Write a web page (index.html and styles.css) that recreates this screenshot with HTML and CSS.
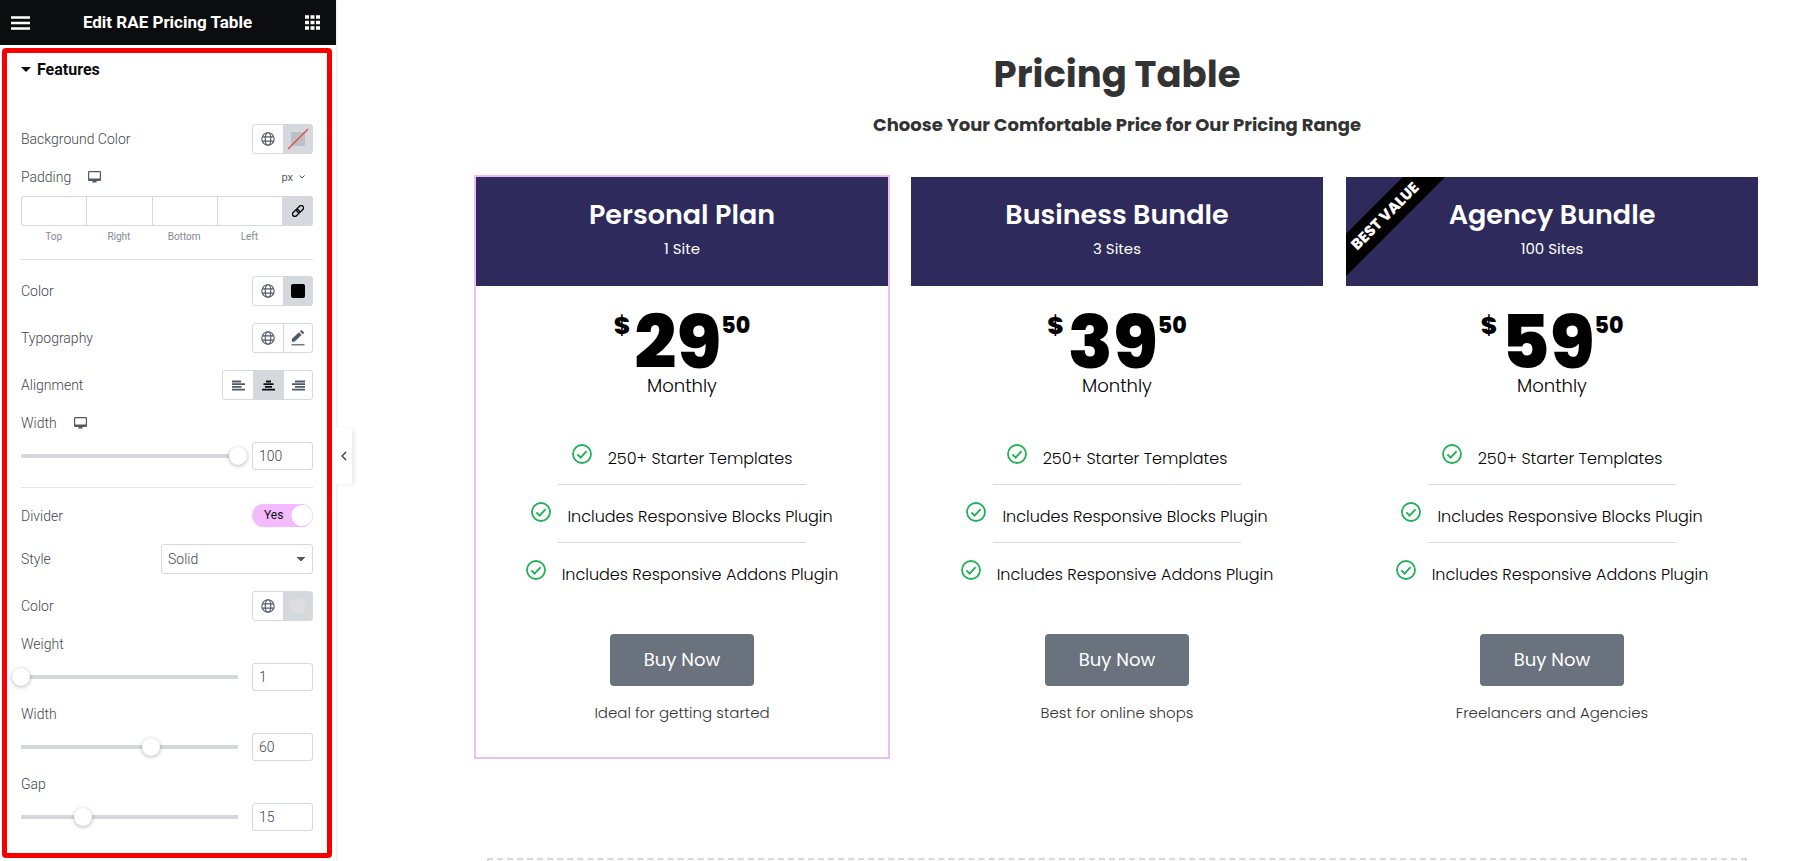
FILE: index.html
```html
<!DOCTYPE html>
<html lang="en">
<head>
    <meta charset="UTF-8">
    <meta name="viewport" content="width=device-width, initial-scale=1.0">
    <title>Edit RAE Pricing Table</title>
    <link rel="stylesheet" href="styles.css">
</head>
<body>
    <!-- shared icons -->
    <svg class="sprite" aria-hidden="true">
        <symbol id="icon-globe" viewBox="0 0 14 14">
            <g fill="none" stroke="currentColor" stroke-width="1.1">
                <circle cx="7" cy="7" r="6.2"/>
                <ellipse cx="7" cy="7" rx="2.8" ry="6.2"/>
                <path d="M1.2 4.9h11.6M1.2 9.1h11.6"/>
            </g>
        </symbol>
        <symbol id="icon-desktop" viewBox="0 0 13 12">
            <path d="M1.2 0h10.6Q13 0 13 1.2v7.6Q13 10 11.8 10H8.4v.6L9 11.4H4l.6-.8V10H1.2Q0 10 0 8.800V1.200Q0 0 1.200 0zM1.200 1.200v6.300h10.600V1.200z" fill="currentColor" fill-rule="evenodd"/>
        </symbol>
        <symbol id="icon-check" viewBox="0 0 20 20">
            <circle cx="10" cy="10" r="9" fill="none" stroke="currentColor" stroke-width="1.8"/>
            <path d="M5.400 10.400l3.200 3.200 6-6.400" fill="none" stroke="currentColor" stroke-width="1.900"/>
        </symbol>
    </svg>

    <div class="editor">
        <aside class="sidebar">
            <header class="sidebar-header">
                <button class="header-btn" aria-label="Menu">
                    <svg width="19" height="14" viewBox="0 0 19 14"><path d="M0 1.500h19M0 7h19M0 12.500h19" stroke="#fff" stroke-width="2.600"/></svg>
                </button>
                <h2 class="sidebar-title">Edit RAE Pricing Table</h2>
                <button class="header-btn" aria-label="Widgets">
                    <svg width="15" height="15" viewBox="0 0 15 15"><path d="M0 2h4m1.500 0h4M11 2h4M0 7.500h4m1.500 0h4m1.500 0h4M0 13h4m1.500 0h4m1.500 0h4" stroke="#fff" stroke-width="3.600"/></svg>
                </button>
            </header>

            <div class="panel">
                <button class="section-toggle" aria-expanded="true">Features</button>

                <div class="group">
                    <div class="row">
                        <span class="label">Background Color</span>
                        <div class="btn-group">
                            <button class="btn" aria-label="Global background color"><svg class="icon"><use href="#icon-globe"/></svg></button>
                            <button class="btn active" aria-label="Pick background color">
                                <svg width="22" height="22" viewBox="0 0 22 22"><rect x="4" y="4" width="14" height="14" rx="1" fill="#bcbfc3"/><path d="M1 21L21 1" stroke="#e2474b" stroke-width="1.300"/></svg>
                            </button>
                        </div>
                    </div>
                    <div class="block">
                        <div class="block-head">
                            <span class="label">Padding</span>
                            <svg class="device"><use href="#icon-desktop"/></svg>
                            <button class="unit">px
                                <svg width="6" height="4" viewBox="0 0 6 4"><path d="M.5.5L3 3 5.500.5" fill="none" stroke="currentColor"/></svg>
                            </button>
                        </div>
                        <div class="dimensions">
                            <div class="dimension">
                                <input id="padTop" type="text">
                                <label for="padTop">Top</label>
                            </div>
                            <div class="dimension">
                                <input id="padRight" type="text">
                                <label for="padRight">Right</label>
                            </div>
                            <div class="dimension">
                                <input id="padBottom" type="text">
                                <label for="padBottom">Bottom</label>
                            </div>
                            <div class="dimension">
                                <input id="padLeft" type="text">
                                <label for="padLeft">Left</label>
                            </div>
                            <button class="link-btn" aria-label="Link values">
                                <svg width="12" height="12" viewBox="0 0 12 12"><g transform="rotate(-45 6 6)" fill="none" stroke="currentColor" stroke-width="1.400"><rect x="-.8" y="3.700" width="7.800" height="4.600" rx="2.300"/><rect x="5" y="3.700" width="7.800" height="4.600" rx="2.300"/></g></svg>
                            </button>
                        </div>
                    </div>
                </div>

                <div class="group">
                    <div class="row">
                        <span class="label">Color</span>
                        <div class="btn-group">
                            <button class="btn" aria-label="Global color"><svg class="icon"><use href="#icon-globe"/></svg></button>
                            <button class="btn active" aria-label="Pick color"><span class="swatch black"></span></button>
                        </div>
                    </div>
                    <div class="row">
                        <span class="label">Typography</span>
                        <div class="btn-group">
                            <button class="btn" aria-label="Global typography"><svg class="icon"><use href="#icon-globe"/></svg></button>
                            <button class="btn" aria-label="Edit typography">
                                <svg width="14" height="16" viewBox="0 0 14 16"><path d="M.8 11.800V9L8 2.300l2.600 2.600-7.200 6.900zM9 1.400L10.400 0l3 2.800-1.700 1.500z" fill="currentColor"/><path d="M.5 14.800h13" stroke="currentColor" stroke-width="1.200"/></svg>
                            </button>
                        </div>
                    </div>
                    <div class="row">
                        <span class="label">Alignment</span>
                        <div class="btn-group">
                            <button class="btn" aria-label="Left"><svg class="align" viewBox="0 0 13 11"><path d="M0 1.500h9M0 4.200h13M0 6.900h9.500M0 9.600h13"/></svg></button>
                            <button class="btn active" aria-label="Center"><svg class="align" viewBox="0 0 13 11"><path d="M4 1.500h5M1.500 4.200h10M3 6.900h7M0 9.600h13"/></svg></button>
                            <button class="btn" aria-label="Right"><svg class="align" viewBox="0 0 13 11"><path d="M3 1.500h10M0 4.200h13M3 6.900h10M0 9.600h13"/></svg></button>
                        </div>
                    </div>
                    <div class="block">
                        <div class="block-head">
                            <label class="label" for="width">Width</label>
                            <svg class="device"><use href="#icon-desktop"/></svg>
                        </div>
                        <div class="slider">
                            <input type="range" min="0" max="100" value="100" aria-label="Width slider">
                            <input id="width" class="number" type="text" value="100">
                        </div>
                    </div>
                </div>

                <div class="group">
                    <div class="row">
                        <label class="label" for="divider">Divider</label>
                        <div class="switch">
                            <input id="divider" type="checkbox" checked>
                            <span class="switch-text">Yes</span>
                        </div>
                    </div>
                    <div class="row">
                        <label class="label" for="style">Style</label>
                        <select id="style" class="select">
                            <option>Solid</option>
                            <option>Dashed</option>
                            <option>Dotted</option>
                        </select>
                    </div>
                    <div class="row">
                        <span class="label">Color</span>
                        <div class="btn-group">
                            <button class="btn" aria-label="Global divider color"><svg class="icon"><use href="#icon-globe"/></svg></button>
                            <button class="btn active" aria-label="Pick divider color"><span class="swatch grey"></span></button>
                        </div>
                    </div>
                    <div class="block">
                        <div class="block-head"><label class="label" for="weight">Weight</label></div>
                        <div class="slider">
                            <input type="range" min="1" max="10" value="1" aria-label="Weight slider">
                            <input id="weight" class="number" type="text" value="1">
                        </div>
                    </div>
                    <div class="block">
                        <div class="block-head"><label class="label" for="dividerWidth">Width</label></div>
                        <div class="slider">
                            <input type="range" min="0" max="100" value="60" aria-label="Divider width slider">
                            <input id="dividerWidth" class="number" type="text" value="60">
                        </div>
                    </div>
                    <div class="block">
                        <div class="block-head"><label class="label" for="gap">Gap</label></div>
                        <div class="slider">
                            <input type="range" min="1" max="50" value="15" aria-label="Gap slider">
                            <input id="gap" class="number" type="text" value="15">
                        </div>
                    </div>
                </div>
            </div>

            <button class="collapse" aria-label="Hide panel">
                <svg width="6" height="10" viewBox="0 0 6 10"><path d="M5 1L1 5l4 4" fill="none" stroke="#333" stroke-width="1.300"/></svg>
            </button>
        </aside>

        <main class="preview">
            <h1 class="page-title">Pricing Table</h1>
            <p class="page-subtitle">Choose Your Comfortable Price for Our Pricing Range</p>

            <div class="plans">
                <section class="plan selected">
                    <header class="plan-header">
                        <h3>Personal Plan</h3>
                        <p>1 Site</p>
                    </header>
                    <div class="price"><span class="currency">$</span><span class="amount">29</span><span class="cents">50</span></div>
                    <div class="period">Monthly</div>
                    <ul class="features">
                        <li><svg><use href="#icon-check"/></svg>250+ Starter Templates</li>
                        <li><svg><use href="#icon-check"/></svg>Includes Responsive Blocks Plugin</li>
                        <li><svg><use href="#icon-check"/></svg>Includes Responsive Addons Plugin</li>
                    </ul>
                    <a href="#" class="buy">Buy Now</a>
                    <p class="note">Ideal for getting started</p>
                </section>

                <section class="plan">
                    <header class="plan-header">
                        <h3>Business Bundle</h3>
                        <p>3 Sites</p>
                    </header>
                    <div class="price"><span class="currency">$</span><span class="amount">39</span><span class="cents">50</span></div>
                    <div class="period">Monthly</div>
                    <ul class="features">
                        <li><svg><use href="#icon-check"/></svg>250+ Starter Templates</li>
                        <li><svg><use href="#icon-check"/></svg>Includes Responsive Blocks Plugin</li>
                        <li><svg><use href="#icon-check"/></svg>Includes Responsive Addons Plugin</li>
                    </ul>
                    <a href="#" class="buy">Buy Now</a>
                    <p class="note">Best for online shops</p>
                </section>

                <section class="plan">
                    <div class="ribbon"><span>BEST VALUE</span></div>
                    <header class="plan-header">
                        <h3>Agency Bundle</h3>
                        <p>100 Sites</p>
                    </header>
                    <div class="price"><span class="currency">$</span><span class="amount">59</span><span class="cents">50</span></div>
                    <div class="period">Monthly</div>
                    <ul class="features">
                        <li><svg><use href="#icon-check"/></svg>250+ Starter Templates</li>
                        <li><svg><use href="#icon-check"/></svg>Includes Responsive Blocks Plugin</li>
                        <li><svg><use href="#icon-check"/></svg>Includes Responsive Addons Plugin</li>
                    </ul>
                    <a href="#" class="buy">Buy Now</a>
                    <p class="note">Freelancers and Agencies</p>
                </section>
            </div>

            <div class="drop-area"></div>
        </main>
    </div>
</body>
</html>
```
FILE: styles.css
```css
* {
    box-sizing: border-box;
}

body {
    margin: 0;
    background: #fff;
    font-family: Poppins, Inter, sans-serif;
    color: #000;
}

h1, h2, h3, p, ul {
    margin: 0;
    padding: 0;
}

button, input, select {
    font-family: inherit;
    margin: 0;
    padding: 0;
}

button {
    border: none;
    background: none;
    color: inherit;
    cursor: pointer;
}

svg {
    display: block;
}

.sprite {
    position: absolute;
    width: 0;
    height: 0;
}

.editor {
    display: flex;
    height: 100vh;
    overflow: hidden;
}

/* sidebar */
.sidebar {
    position: relative;
    flex: 0 0 336px;
    font-family: Roboto, sans-serif;
    font-size: 14px;
    color: #515962;
    box-shadow: 0 0 3px rgba(0, 0, 0, 0.15);
}

.sidebar-header {
    display: flex;
    align-items: center;
    justify-content: space-between;
    height: 45px;
    padding: 0 16px 0 11px;
    background: #0c0d0e;
}

.sidebar-title {
    color: #fff;
    font-size: 17px;
    line-height: 20px;
    padding-bottom: 2px;
    font-weight: bold;
}

.panel {
    margin: 3px 4px 3px 2px;
    padding: 0 14px 5px;
    border: 5px solid #f80000;
    border-radius: 4px;
}

.section-toggle {
    display: flex;
    align-items: center;
    gap: 6px;
    height: 33px;
    margin-bottom: 22px;
    color: #0c0d0e;
    font-size: 16px;
    font-weight: bold;
}

.section-toggle::before {
    content: "";
    border: 5px solid transparent;
    border-top-color: #0c0d0e;
    border-bottom: none;
}

.group {
    padding: 16px 0 17px;
}

.group + .group {
    border-top: 1px solid #e3e4e6;
}

.label {
    color: #3f464e;
    font-weight: 300;
}

.row {
    display: flex;
    align-items: center;
    justify-content: space-between;
}

.row + .row {
    margin-top: 17px;
}

.block {
    margin-top: 13px;
}

.block-head {
    display: flex;
    align-items: center;
    height: 20px;
    margin-bottom: 9px;
}

.device {
    width: 13px;
    height: 12px;
    margin-left: 17px;
}

.unit {
    display: flex;
    align-items: center;
    gap: 6px;
    margin-left: auto;
    padding-right: 8px;
    font-size: 11px;
}

.btn-group {
    display: flex;
    height: 30px;
    border: 1px solid #d5d8dc;
    border-radius: 3px;
}

.btn {
    display: flex;
    align-items: center;
    justify-content: center;
    width: 30px;
}

.btn:last-child {
    width: 29px;
}

.btn + .btn {
    border-left: 1px solid #d5d8dc;
}

.btn.active {
    background: #d5d8dc;
    color: #0c0d0e;
}

.icon {
    width: 14px;
    height: 14px;
}

.align {
    width: 13px;
    height: 11px;
    stroke: currentColor;
    stroke-width: 1.8;
}

.swatch {
    width: 14px;
    height: 14px;
    border-radius: 2px;
}

.swatch.black {
    background: #000;
}

.swatch.grey {
    background: #ddd;
}

.dimensions {
    display: flex;
}

.dimension {
    flex: 1;
    min-width: 0;
    text-align: center;
}

.dimension input {
    display: block;
    width: 100%;
    height: 30px;
    border: 1px solid #d5d8dc;
    border-right: none;
}

.dimension:first-child input {
    border-radius: 3px 0 0 3px;
}

.dimension label {
    display: block;
    margin-top: 5px;
    font-size: 10px;
    line-height: 11px;
    color: #818a96;
}

.link-btn {
    display: flex;
    align-items: center;
    justify-content: center;
    width: 31px;
    height: 30px;
    background: #d5d8dc;
    border-radius: 0 3px 3px 0;
    color: #0c0d0e;
}

.slider {
    display: flex;
    align-items: center;
    gap: 5px;
    margin-left: -9px;
}

.slider input[type="range"] {
    flex: 1;
    min-width: 0;
    height: 18px;
    -webkit-appearance: none;
    appearance: none;
    background: linear-gradient(#d5d8dc, #d5d8dc) center / calc(100% - 18px) 4px no-repeat;
}

.slider input[type="range"]::-webkit-slider-thumb {
    -webkit-appearance: none;
    width: 18px;
    height: 18px;
    border-radius: 50%;
    background: #fff;
    box-shadow: 0 1px 4px rgba(0, 0, 0, 0.3);
}

.number {
    width: 61px;
    height: 28px;
    padding: 0 6px;
    border: 1px solid #d5d8dc;
    border-radius: 3px;
    color: #3f464e;
    font-size: 14px;
    font-weight: 300;
}

.switch {
    position: relative;
    height: 23px;
}

.switch input {
    display: block;
    appearance: none;
    width: 61px;
    height: 23px;
    border-radius: 12px;
    background: radial-gradient(circle at 50px 50%, #fff 10px, transparent 11px) #f3bafd;
}

.switch-text {
    position: absolute;
    top: 0;
    left: 12px;
    font-size: 12px;
    line-height: 23px;
    color: #0c0d0e;
    pointer-events: none;
}

.select {
    width: 152px;
    height: 30px;
    padding: 0 6px;
    border: 1px solid #d5d8dc;
    border-radius: 3px;
    appearance: none;
    background: conic-gradient(from -45deg at 50% 100%, #515962 90deg, transparent 0) right 6px center / 10px 5px no-repeat;
    color: #3f464e;
    font-size: 14px;
    font-weight: 300;
}

.collapse {
    position: absolute;
    top: 428px;
    left: 100%;
    display: flex;
    align-items: center;
    justify-content: center;
    width: 16px;
    height: 56px;
    background: #fff;
    border-radius: 0 3px 3px 0;
    box-shadow: 3px 1px 4px rgba(0, 0, 0, 0.08);
}

/* preview */
.preview {
    flex: 1;
    min-width: 0;
    padding: 50px 55px 0 140px;
    text-align: center;
}

.page-title {
    color: #333;
    font-size: 37px;
    line-height: 48px;
    font-weight: 700;
}

.page-subtitle {
    margin: 15px 0 40px;
    color: #333;
    font-size: 18px;
    line-height: 24px;
    font-weight: 700;
}

.plans {
    display: grid;
    grid-template-columns: repeat(3, 1fr);
    gap: 23px;
}

.plan {
    position: relative;
    padding-bottom: 32px;
}

.plan.selected {
    outline: 2px solid #edbdf8;
}

.plan-header {
    height: 109px;
    padding-top: 20px;
    background: #2e2a5b;
    color: #fff;
}

.plan-header h3 {
    font-size: 27px;
    line-height: 36px;
    font-weight: 600;
}

.plan-header p {
    margin-top: 4px;
    font-size: 15px;
    line-height: 24px;
    font-weight: 400;
}

.ribbon {
    position: absolute;
    top: 0;
    left: 0;
    width: 120px;
    height: 109px;
    overflow: hidden;
}

.ribbon span {
    position: absolute;
    top: 24px;
    left: -36px;
    width: 150px;
    background: #000;
    color: #fff;
    font-size: 15px;
    line-height: 30px;
    font-weight: 800;
    transform: rotate(-45deg);
}

.price {
    display: flex;
    justify-content: center;
    margin-top: 24px;
    font-weight: 800;
}

.currency {
    margin-right: 4px;
    font-size: 25px;
    line-height: 32px;
}

.amount {
    font-size: 74px;
    line-height: 64px;
}

.cents {
    font-size: 22px;
    line-height: 32px;
}

.period {
    font-size: 18px;
    line-height: 24px;
    font-weight: 300;
}

.features {
    margin-top: 32px;
    list-style: none;
    font-size: 16px;
    line-height: 30px;
    font-weight: 300;
}

.features li {
    display: flex;
    flex-wrap: wrap;
    justify-content: center;
    padding-top: 14px;
}

.features li:not(:last-child)::after {
    content: "";
    flex: 0 0 60%;
    margin: 10px 20% 3px;
    border-top: 1px solid #d9d9d9;
}

.features svg {
    width: 20px;
    height: 20px;
    margin-right: 16px;
    color: #23b158;
}

.buy {
    display: inline-block;
    width: 144px;
    margin-top: 44px;
    border-radius: 4px;
    background: #69727d;
    color: #fff;
    font-size: 18px;
    line-height: 52px;
    font-weight: 400;
    text-decoration: none;
}

.note {
    margin-top: 15px;
    color: #333;
    font-size: 15px;
    line-height: 24px;
    font-weight: 300;
}

.drop-area {
    height: 120px;
    margin: 101px 11px 0;
    border: 2px dashed #d5d8dc;
}
```
